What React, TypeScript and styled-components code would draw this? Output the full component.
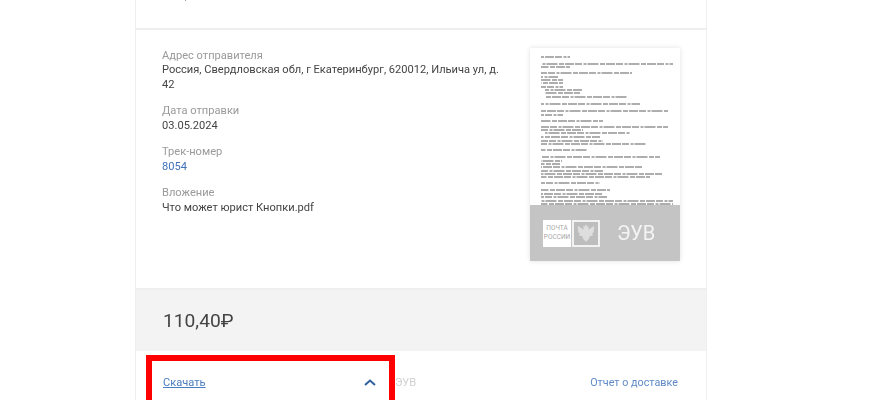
import React from "react";
import styled, { createGlobalStyle } from "styled-components";

const GlobalStyle = createGlobalStyle`
  html, body {
    margin: 0;
    padding: 0;
    background: #fff;
    font-family: Roboto, "Liberation Sans", sans-serif;
  }
`;

// x1, y, x2 of the text lines seen on the scanned page
const docLines: [number, number, number][] = [
  [11, 9, 40], [11, 16, 143], [11, 19, 40], [11, 25, 102], [11, 29, 28], [11, 32, 33], [11, 35, 33],
  [11, 39, 33], [15, 42, 53], [15, 45, 50], [15, 49, 97], [11, 56, 110], [11, 63, 138], [11, 67, 33],
  [11, 73, 73], [11, 79, 138], [11, 82, 53], [15, 85, 100], [11, 89, 70], [11, 93, 73], [11, 96, 117],
  [11, 102, 58], [11, 109, 130], [11, 113, 32], [11, 116, 30], [11, 119, 113], [11, 123, 73],
  [11, 126, 133], [11, 129, 120], [11, 135, 70], [11, 142, 80], [11, 146, 73], [11, 149, 77],
  [11, 153, 143], [11, 156, 143],
];

const App = () => {
  return (
    <Screen>
      <GlobalStyle />
      <Card>
        <TopSection>
          <PageNote>стр. 55</PageNote>
        </TopSection>
        <Details>
          <Fields>
            <Field>
              <Label>Адрес отправителя</Label>
              <Value>Россия, Свердловская обл, г Екатеринбург, 620012, Ильича ул, д. 42</Value>
            </Field>
            <Field>
              <Label>Дата отправки</Label>
              <Value>03.05.2024</Value>
            </Field>
            <Field>
              <Label>Трек-номер</Label>
              <Value $link>8054</Value>
            </Field>
            <Field>
              <Label>Вложение</Label>
              <Value>Что может юрист Кнопки.pdf</Value>
            </Field>
          </Fields>
          <Preview>
            <DocPage>
              <svg width="150" height="157" viewBox="0 0 150 157">
                <g stroke="#5f5f5f" strokeWidth="1.1" strokeDasharray="7 1.5 3 1 11 1.5 5 1 9 1" filter="blur(0.7px)">
                  {docLines.map(([x1, y, x2]) => (
                    <line key={y} x1={x1} y1={y} x2={x2} y2={y} strokeDashoffset={y * 3} />
                  ))}
                </g>
              </svg>
            </DocPage>
            <Stamp>
              <LogoWord>
                ПОЧТА
                <br />
                РОССИИ
              </LogoWord>
              <LogoEmblem>
                <svg width="22" height="22" viewBox="0 0 20 20">
                  <path
                    d="M10 2l1.500 2.500 1-1-.3 3.500 5.300-3.500-.5 6-1.500 .5 1 2-3 1-1 2.500-2.500 2.500-2.500-2.500-1-2.500-3-1 1-2-1.500-.5-.5-6 5.300 3.500-.3-3.500 1 1z"
                    fill="#dedede"
                  />
                </svg>
              </LogoEmblem>
              <StampTitle>ЭУВ</StampTitle>
            </Stamp>
          </Preview>
        </Details>
        <PriceBar>
          <Price>110,40₽</Price>
        </PriceBar>
        <Footer>
          <DownloadGroup>
            <DownloadLink>Скачать</DownloadLink>
            <svg width="12" height="7" viewBox="0 0 12 7" fill="none">
              <path d="M1 6l5-4.500 5 4.500" stroke="#2f5f9f" strokeWidth="2" />
            </svg>
          </DownloadGroup>
          <Muted>ЭУВ</Muted>
          <ReportLink>Отчет о доставке</ReportLink>
        </Footer>
      </Card>
      <Highlight />
    </Screen>
  );
};

export default App;

const Screen = styled.div`
  position: relative;
  width: 870px;
  height: 400px;
  overflow: hidden;
  background: #fff;
`;

const Card = styled.div`
  width: 570px;
  height: 400px;
  margin-left: 135px;
  border-left: 1px solid #efefef;
  border-right: 1px solid #efefef;
  filter: blur(0.45px);
`;

const TopSection = styled.div`
  height: 30px;
  box-sizing: border-box;
  padding: 0 0 25px 37px;
  display: flex;
  align-items: flex-end;
  border-bottom: 2px solid #eeeeee;
`;

const PageNote = styled.span`
  font-size: 11.1px;
  line-height: 14px;
  color: #999;
`;

const Details = styled.div`
  height: 258px;
  display: flex;
  justify-content: space-between;
  box-sizing: border-box;
  padding: 18px 26px 0 26px;
`;

const Fields = styled.div`
  width: 345px;
  padding-top: 0.6px;
  display: flex;
  flex-direction: column;
  gap: 12px;
`;

const Field = styled.div`
  display: flex;
  flex-direction: column;
`;

const Label = styled.div`
  font-size: 11.1px;
  line-height: 14.5px;
  color: #9a9a9a;
`;

const Value = styled.div<{ $link?: boolean }>`
  font-size: 11.1px;
  line-height: 14.5px;
  color: ${(p) => (p.$link ? "#3f72b8" : "#444")};
`;

const Preview = styled.div`
  width: 150px;
  height: 213px;
  display: flex;
  flex-direction: column;
  box-shadow: 0 0 5px rgba(0, 0, 0, 0.12);
`;

const DocPage = styled.div`
  height: 157px;
  background: #fff;
`;

const Stamp = styled.div`
  height: 56px;
  background: #c4c4c4;
  display: flex;
  align-items: center;
  padding-left: 13px;
`;

const LogoWord = styled.div`
  width: 28px;
  height: 27px;
  background: #fff;
  color: #a8a8a8;
  font-size: 6.5px;
  line-height: 9px;
  text-align: center;
  display: flex;
  align-items: center;
  justify-content: center;
`;

const LogoEmblem = styled.div`
  width: 24px;
  height: 23px;
  border: 2px solid #f2f2f2;
  margin-left: 1px;
  background: #bdbdbd;
  display: flex;
  align-items: center;
  justify-content: center;
`;

const StampTitle = styled.div`
  margin-left: 17px;
  font-size: 20px;
  color: #f4f4f4;
`;

const PriceBar = styled.div`
  height: 63px;
  box-sizing: border-box;
  background: #f3f3f3;
  border-top: 2px solid #eeeeee;
  display: flex;
  align-items: center;
  padding-left: 27px;
`;

const Price = styled.div`
  font-size: 19.2px;
  color: #444;
`;

const Footer = styled.div`
  display: flex;
  align-items: center;
  height: 62px;
  padding: 0 28px 0 27px;
`;

const DownloadGroup = styled.div`
  width: 213px;
  display: flex;
  align-items: center;
  justify-content: space-between;
`;

const DownloadLink = styled.a`
  font-size: 11.1px;
  color: #4a7cc0;
  text-decoration: underline;
`;

const Muted = styled.span`
  margin-left: 19px;
  font-size: 11.1px;
  color: #d0d0d0;
`;

const ReportLink = styled.a`
  margin-left: auto;
  font-size: 10.8px;
  color: #5f8ac6;
`;

const Highlight = styled.div`
  position: absolute;
  left: 146px;
  top: 355px;
  width: 237px;
  height: 60px;
  border: 6px solid #fe0000;
`;
